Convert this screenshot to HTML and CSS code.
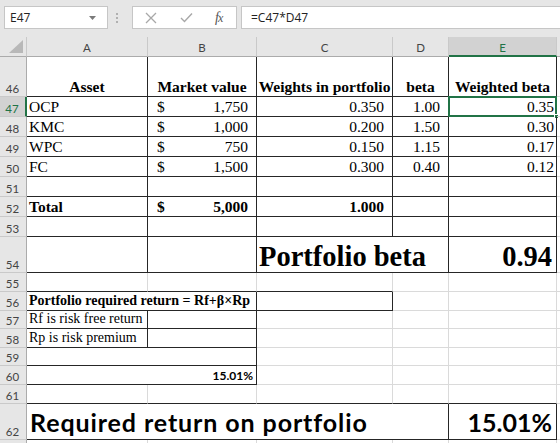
FILE: index.html
```html
<!DOCTYPE html>
<html>
<head>
<meta charset="utf-8">
<link rel="stylesheet" href="styles.css">
</head>
<body>
<div class="fbar">
  <div class="namebox"><span>E47</span>
    <svg class="dd" width="7" height="4" viewBox="0 0 7 4"><path d="M0 0h7L3.5 4z" fill="#7a7a7a"/></svg>
  </div>
  <div class="grip"><i></i><i></i><i></i></div>
  <div class="fxbox">
    <svg class="ico x" width="12" height="12" viewBox="0 0 12 12"><path d="M1 1L11 11M11 1L1 11" stroke="#a8a8a8" stroke-width="1.3" fill="none"/></svg>
    <svg class="ico ok" width="13" height="11" viewBox="0 0 13 11"><path d="M1 6L4.5 9.5L12 1.5" stroke="#a8a8a8" stroke-width="1.4" fill="none"/></svg>
    <span class="fx">f<span class="fxx">x</span></span>
  </div>
  <div class="finput">=C47*D47</div>
</div>
<div class="g">
  <!-- column headers -->
  <div class="corner"><svg width="14" height="13" viewBox="0 0 14 13"><path d="M14 0V13H0z" fill="#b8b8b8"/></svg></div>
  <div class="ch">A</div><div class="ch">B</div><div class="ch">C</div><div class="ch">D</div><div class="ch sel">E</div><div class="ch last"></div>

  <!-- 46 -->
  <div class="rh">46</div>
  <div class="c m b dr db">Asset</div>
  <div class="c m b dr db">Market value</div>
  <div class="c m b dr db">Weights in portfolio</div>
  <div class="c m b dr db">beta</div>
  <div class="c m b dr db etop">Weighted beta</div>
  <div class="c"></div>

  <!-- 47 -->
  <div class="rh act">47</div>
  <div class="c dr db">OCP</div>
  <div class="c acct dr db"><span>$</span><span>1,750</span></div>
  <div class="c r p8 dr db">0.350</div>
  <div class="c r p8 dr db">1.00</div>
  <div class="c r p2 dr db cur">0.35<span class="selbox"></span><span class="handle"></span></div>
  <div class="c"></div>

  <!-- 48 -->
  <div class="rh">48</div>
  <div class="c dr db">KMC</div>
  <div class="c acct dr db"><span>$</span><span>1,000</span></div>
  <div class="c r p8 dr db">0.200</div>
  <div class="c r p8 dr db">1.50</div>
  <div class="c r p2 dr db">0.30</div>
  <div class="c"></div>

  <!-- 49 -->
  <div class="rh">49</div>
  <div class="c dr db">WPC</div>
  <div class="c acct dr db"><span>$</span><span>750</span></div>
  <div class="c r p8 dr db">0.150</div>
  <div class="c r p8 dr db">1.15</div>
  <div class="c r p2 dr db">0.17</div>
  <div class="c"></div>

  <!-- 50 -->
  <div class="rh">50</div>
  <div class="c dr db">FC</div>
  <div class="c acct dr db"><span>$</span><span>1,500</span></div>
  <div class="c r p8 dr db">0.300</div>
  <div class="c r p8 dr db">0.40</div>
  <div class="c r p2 dr db">0.12</div>
  <div class="c"></div>

  <!-- 51 -->
  <div class="rh">51</div>
  <div class="c dr db"></div><div class="c dr db"></div><div class="c dr db"></div><div class="c dr db"></div><div class="c dr db"></div>
  <div class="c"></div>

  <!-- 52 -->
  <div class="rh">52</div>
  <div class="c b dr db">Total</div>
  <div class="c acct b dr db"><span>$</span><span>5,000</span></div>
  <div class="c r p8 b dr db">1.000</div>
  <div class="c dr db"></div>
  <div class="c dr db"></div>
  <div class="c"></div>

  <!-- 53 -->
  <div class="rh">53</div>
  <div class="c dr db"></div><div class="c dr db"></div><div class="c dr db"></div><div class="c dr db"></div><div class="c dr db"></div>
  <div class="c"></div>

  <!-- 54 -->
  <div class="rh">54</div>
  <div class="c dr db"></div>
  <div class="c dr db"></div>
  <div class="c span2 big dr db">Portfolio beta</div>
  <div class="c r big p4 dr db">0.94</div>
  <div class="c"></div>

  <!-- 55 -->
  <div class="rh">55</div>
  <div class="c db"></div><div class="c db"></div><div class="c db"></div><div class="c"></div><div class="c"></div>
  <div class="c"></div>

  <!-- 56 -->
  <div class="rh">56</div>
  <div class="c span2 b s14 dr db">Portfolio required return = Rf+β×Rp</div>
  <div class="c dr db"></div>
  <div class="c"></div><div class="c"></div>
  <div class="c"></div>

  <!-- 57 -->
  <div class="rh">57</div>
  <div class="c s14 dr db">Rf is risk free return</div>
  <div class="c dr db"></div>
  <div class="c"></div><div class="c"></div><div class="c"></div>
  <div class="c"></div>

  <!-- 58 -->
  <div class="rh">58</div>
  <div class="c s14 dr db">Rp is risk premium</div>
  <div class="c dr db"></div>
  <div class="c"></div><div class="c"></div><div class="c"></div>
  <div class="c"></div>

  <!-- 59 -->
  <div class="rh">59</div>
  <div class="c span2 dr db"></div>
  <div class="c"></div><div class="c"></div><div class="c"></div>
  <div class="c"></div>

  <!-- 60 -->
  <div class="rh">60</div>
  <div class="c span2 r sm p3 dr db">15.01%</div>
  <div class="c"></div><div class="c"></div><div class="c"></div>
  <div class="c"></div>

  <!-- 61 -->
  <div class="rh">61</div>
  <div class="c db"></div><div class="c db"></div><div class="c db"></div><div class="c db"></div><div class="c db"></div>
  <div class="c"></div>

  <!-- 62 -->
  <div class="rh">62</div>
  <div class="c span4 cal lbl dr db">Required return on portfolio</div>
  <div class="c r cal p4 dr db">15.01%</div>
  <div class="c"></div>

  <!-- 63 -->
  <div class="rh"></div>
  <div class="c"></div><div class="c"></div><div class="c"></div><div class="c"></div><div class="c"></div>
  <div class="c"></div>
</div>
</body>
</html>
```

FILE: styles.css
```css
* { box-sizing: border-box; }
html, body { margin: 0; padding: 0; }
body {
  width: 560px;
  height: 443px;
  overflow: hidden;
  background: #fff;
  font-family: "Liberation Serif", "Times New Roman", serif;
  color: #000;
}

/* formula bar */
.fbar {
  height: 37px;
  background: #e6e6e6;
  display: flex;
  align-items: flex-start;
  padding: 6px 0 0 4px;
}
.namebox {
  width: 104px;
  height: 23px;
  background: #fff;
  border: 1px solid #c6c6c6;
  display: flex;
  align-items: center;
  justify-content: space-between;
  padding: 0 11px 0 5px;
  font: 12px "Open Sans", "Liberation Sans", sans-serif;
  color: #222;
}
.grip {
  width: 3px;
  height: 23px;
  margin: 0 13px 0 8px;
  display: flex;
  flex-direction: column;
  justify-content: center;
  gap: 2px;
}
.grip i {
  display: block;
  width: 2px;
  height: 2px;
  background: #b0b0b0;
}
.fxbox {
  width: 105px;
  height: 23px;
  background: #fff;
  border: 1px solid #c6c6c6;
  display: flex;
  align-items: center;
  padding-left: 12px;
}
.ico.ok { margin-left: 23px; }
.fx {
  margin-left: 22px;
  font: italic 14px "Liberation Serif", serif;
  color: #555;
  letter-spacing: -1px;
}
.fxx { font-size: 12px; }
.finput {
  flex: 1;
  margin-left: 4px;
  height: 23px;
  background: #fff;
  border: 1px solid #c6c6c6;
  border-right: none;
  padding-left: 9px;
  display: flex;
  align-items: center;
  font: 12px "Open Sans", "Liberation Sans", sans-serif;
  color: #222;
}

/* sheet grid */
.g {
  display: grid;
  grid-template-columns: 27px 121px 109px 136px 56px 108px 1fr;
  grid-template-rows: 20px 40px repeat(7, 20px) 36px 19px 19px 18px 19px 18px 19px 19px 36px 20px;
}
.corner, .ch, .rh {
  background: #e6e6e6;
  color: #444;
  font: 11.5px "Lato", "Liberation Sans", sans-serif;
}
.corner {
  border-right: 1px solid #c9c9c9;
  border-bottom: 1px solid #ababab;
  display: flex;
  align-items: flex-end;
  justify-content: flex-end;
  padding: 0 3px 3px 0;
}
.ch {
  border-right: 1px solid #c9c9c9;
  border-bottom: 1px solid #ababab;
  display: flex;
  align-items: center;
  justify-content: center;
  padding-top: 1px;
}
.ch.last { border-right: none; }
.ch.sel {
  background: #d2d2d2;
  color: #217346;
  border-bottom: 2px solid #217346;
  padding-top: 2px;
}
.rh {
  border-right: 1px solid #ababab;
  border-bottom: 1px solid #c9c9c9;
  display: flex;
  align-items: flex-end;
  justify-content: center;
  padding: 0 1px 2px 0;
  line-height: 1;
}
.rh.act {
  background: #d2d2d2;
  color: #217346;
  border-right: 2px solid #217346;
}

.c {
  position: relative;
  border-right: 1px solid #dadada;
  border-bottom: 1px solid #dadada;
  display: flex;
  align-items: flex-end;
  justify-content: flex-start;
  padding: 0 2px 2px 2px;
  font-size: 15.5px;
  line-height: 1;
  white-space: nowrap;
}
.s14 { font-size: 14px; }
.dr { border-right-color: #262626; }
.db { border-bottom-color: #262626; }
.m { justify-content: center; }
.r { justify-content: flex-end; }
.b { font-weight: bold; }
.p8 { padding-right: 8px; }
.p4 { padding-right: 4px; }
.p3 { padding-right: 3px; }
.p2 { padding-right: 2px; }
.acct {
  justify-content: space-between;
  padding: 0 8px 2px 9px;
}
.span2 { grid-column: span 2; }
.span4 { grid-column: span 4; }
.big {
  font-size: 28.5px;
  font-weight: bold;
  padding-bottom: 1px;
}
.cal {
  font-family: "Lato", "Liberation Sans", sans-serif;
  font-size: 25px;
  font-weight: bold;
  padding-bottom: 4px;
}
.lbl {
  padding-left: 3px;
  letter-spacing: 0.9px;
}
.sm {
  font-family: "Lato", "Liberation Sans", sans-serif;
  font-size: 12px;
  font-weight: bold;
  padding-bottom: 2px;
}
.etop::before {
  content: "";
  position: absolute;
  left: 0;
  right: -1px;
  top: -1px;
  height: 1px;
  background: #217346;
}
.selbox {
  position: absolute;
  left: -1px;
  top: -1px;
  right: -1px;
  bottom: -1px;
  border: 2px solid #217346;
}
.handle {
  position: absolute;
  right: -3px;
  bottom: -3px;
  width: 5px;
  height: 5px;
  background: #217346;
  border: 1px solid #fff;
}
```
